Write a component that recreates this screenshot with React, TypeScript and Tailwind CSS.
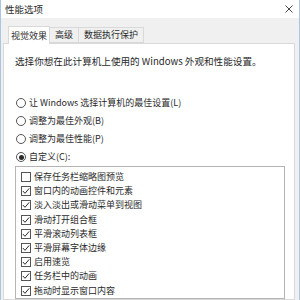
import React from "react";

const FONT = { fontFamily: '"Noto Sans CJK SC", "Noto Sans", sans-serif' };

const effects: { label: string; checked: boolean }[] = [
  { label: "保存任务栏缩略图预览", checked: false },
  { label: "窗口内的动画控件和元素", checked: true },
  { label: "淡入淡出或滑动菜单到视图", checked: true },
  { label: "滑动打开组合框", checked: true },
  { label: "平滑滚动列表框", checked: true },
  { label: "平滑屏幕字体边缘", checked: true },
  { label: "启用速览", checked: true },
  { label: "任务栏中的动画", checked: true },
  { label: "拖动时显示窗口内容", checked: true },
];

const modes = [
  { label: "让 Windows 选择计算机的最佳设置(L)", selected: false },
  { label: "调整为最佳外观(B)", selected: false },
  { label: "调整为最佳性能(P)", selected: false },
  { label: "自定义(C):", selected: true },
];

function Radio({ selected }: { selected: boolean }) {
  return (
    <span className="flex h-[10px] w-[10px] shrink-0 items-center justify-center rounded-full border border-[#555] bg-white">
      {selected && <span className="h-[5px] w-[5px] rounded-full bg-[#2a2a2a]" />}
    </span>
  );
}

function Check({ checked }: { checked: boolean }) {
  return (
    <span className="flex h-[10px] w-[10px] shrink-0 items-center justify-center border border-[#555] bg-white">
      {checked && (
        <svg width="8" height="8" viewBox="0 0 8 8" fill="none">
          <path d="M0.8 4 L3 6.3 L7.2 1.4" stroke="#2a2a2a" strokeWidth="1" />
        </svg>
      )}
    </span>
  );
}

export default function App() {
  return (
    <div
      className="flex h-[300px] w-[300px] flex-col overflow-hidden border-x border-[#a9c4e4] bg-[#f0f0f0] text-[9px] leading-[12px] text-[#2a2a2a]"
      style={FONT}
    >
      {/* title bar */}
      <div className="flex h-[18px] shrink-0 items-center justify-between bg-white pl-[4px] pr-[6px]">
        <span className="text-[9.5px]">性能选项</span>
        <svg width="8" height="8" viewBox="0 0 8 8">
          <path d="M0.5 0.5 L7.5 7.5 M7.5 0.5 L0.5 7.5" stroke="#333" strokeWidth="0.9" />
        </svg>
      </div>

      <div className="flex flex-1 flex-col pl-[2px] pr-[4px] pt-[8px]">
        {/* tabs */}
        <div className="relative z-10 flex h-[17px] items-end pl-[5px]">
          <div className="-mb-px flex h-[18px] w-[42px] items-center justify-center border border-b-0 border-[#d9d9d9] bg-white">
            视觉效果
          </div>
          <div className="flex h-[16px] w-[29px] items-center justify-center border-y border-r border-[#d9d9d9] bg-[#f0f0f0]">
            高级
          </div>
          <div className="flex h-[16px] w-[65px] items-center justify-center border-y border-r border-[#d9d9d9] bg-[#f0f0f0]">
            数据执行保护
          </div>
        </div>

        {/* panel */}
        <div className="flex flex-1 flex-col border border-[#d9d9d9] bg-white pl-[11px] pr-[9px] pt-[11px]">
          <p className="text-[9.6px]">选择你想在此计算机上使用的 Windows 外观和性能设置。</p>

          <div className="mt-[27px] flex flex-col">
            {modes.map((m) => (
              <div key={m.label} className="flex h-[18px] items-center gap-[3px] pl-[1px]">
                <Radio selected={m.selected} />
                <span>{m.label}</span>
              </div>
            ))}
          </div>

          <div className="flex flex-1 flex-col border border-[#b4b4b4] pl-[5px] pt-[3px]">
            {effects.map((e) => (
              <div key={e.label} className="flex h-[14.2px] items-center gap-[3px]">
                <Check checked={e.checked} />
                <span>{e.label}</span>
              </div>
            ))}
          </div>
        </div>
      </div>
    </div>
  );
}
